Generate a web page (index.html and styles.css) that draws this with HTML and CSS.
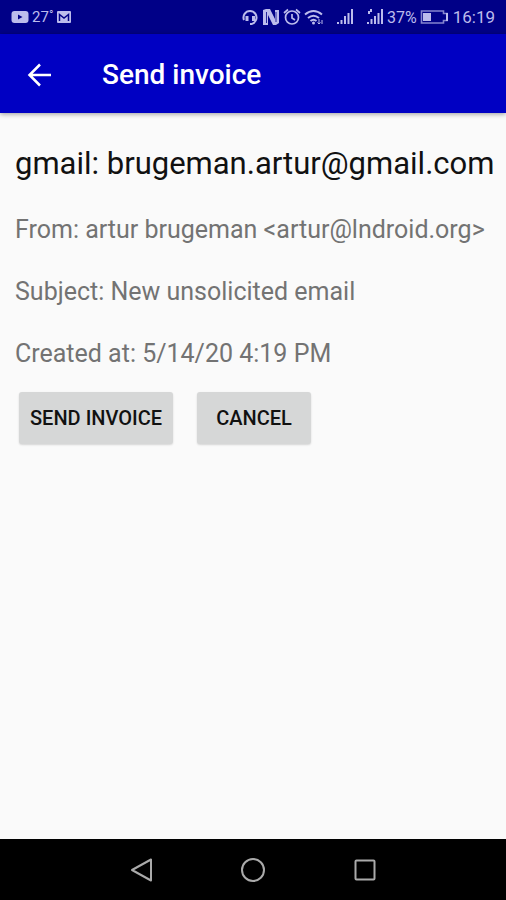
FILE: index.html
```html
<!DOCTYPE html>
<html lang="en">
<head>
<meta charset="utf-8">
<meta name="viewport" content="width=device-width, initial-scale=1">
<title>Send invoice</title>
<link rel="stylesheet" href="styles.css">
</head>
<body>
<div class="status">
  <div class="notices">
    <svg width="18" height="14" viewBox="0 0 18 14"><rect x="0.500" y="1" width="17" height="12" rx="3" fill="currentColor"/><path d="M7 4.500v5l4.500-2.500z" fill="#000087"/></svg>
    <span class="temp">27<span class="degree">°</span></span>
    <svg width="16" height="14" viewBox="0 0 16 14"><rect x="1" y="1" width="14" height="12" rx="1" fill="currentColor"/><path d="M3.500 11V4.500L8 8l4.500-3.500V11" fill="none" stroke="#000087" stroke-width="1.500"/></svg>
  </div>
  <div class="signals">
    <svg width="18" height="18" viewBox="0 0 18 18" fill="none" stroke="currentColor" stroke-width="2"><path d="M3 12a6.500 6.500 0 1 1 12 0q-1.500 4-6 4"/><path d="M6 8v5M12.500 8v5" stroke-width="3"/></svg>
    <svg width="18" height="18" viewBox="0 0 18 18"><path d="M1 2l3-1h4l5 10V2h4v13l-3 2h-3L6 7v10H1z" fill="currentColor"/><path d="M4.500 4v11M14 4v10" stroke="#000087" stroke-width="0.800"/></svg>
    <svg width="18" height="18" viewBox="0 0 18 18" fill="none" stroke="currentColor" stroke-width="1.700"><circle cx="9" cy="9.500" r="6.500"/><path d="M9 6v4l3 2M1 5l4-3.500M17 5l-4-3.500"/></svg>
    <svg width="20" height="18" viewBox="0 0 20 18" fill="none" stroke="currentColor" stroke-width="2"><path d="M1 6.500q8.500-7 17 0M4 10q5.500-4.500 11 0M6.500 13q3-2.500 6 0"/><circle cx="9.500" cy="15" r="1.500" fill="currentColor" stroke="none"/><path d="M15 11v5m-1.500-1.500L15 16l1.500-1.500M18 16v-4" stroke-width="1"/></svg>
    <svg class="bars" width="18" height="18" viewBox="0 0 18 18" fill="currentColor"><path d="M1 14h2v2H1zM4.500 12h2v4h-2zM8 8h2v8H8zM11.500 5h2v11h-2zM15 1h2v15h-2z"/></svg>
    <svg class="bars" width="18" height="18" viewBox="0 0 18 18" fill="currentColor"><path d="M1 14h2v2H1zM4.500 11h2v5h-2zM8 8h2v8H8zM11.500 5h2v11h-2zM15 1h2v15h-2zM2 3h2v3H2zM4 1h2v3H4z"/></svg>
    <span class="percent">37%</span>
    <svg class="battery" width="29" height="16" viewBox="0 0 29 16"><path d="M1.500 2h22v2.500H27v7h-3.500V14h-22z" fill="none" stroke="currentColor" stroke-opacity="0.700" stroke-width="1.600"/><path d="M3 4h8v8H3zM26 4h2v8h-2z" fill="currentColor"/></svg>
    <span class="clock">16:19</span>
  </div>
</div>
<header class="appbar">
  <button class="back" type="button" aria-label="Back"><svg width="28" height="28" viewBox="0 0 28 28" fill="none" stroke="currentColor" stroke-width="2.500"><path d="M25 14H4M14 3.500L3.500 14 14 24.500"/></svg></button>
  <h1>Send invoice</h1>
</header>
<main>
  <h2>gmail: brugeman.artur@gmail.com</h2>
  <p>From: artur brugeman &lt;artur@lndroid.org&gt;</p>
  <p>Subject: New unsolicited email</p>
  <p>Created at: 5/14/20 4:19 PM</p>
  <div class="actions">
    <button type="button">SEND INVOICE</button>
    <button type="button">CANCEL</button>
  </div>
</main>
<nav>
  <button type="button" aria-label="Back"><svg width="26" height="26" viewBox="0 0 26 26"><path d="M23 2.500v21L4 13z"/></svg></button>
  <button type="button" aria-label="Home"><svg width="26" height="26" viewBox="0 0 26 26"><circle cx="13" cy="13" r="11"/></svg></button>
  <button type="button" aria-label="Recent apps"><svg width="26" height="26" viewBox="0 0 26 26"><rect x="3.500" y="3.500" width="19" height="19" rx="1"/></svg></button>
</nav>
</body>
</html>
```
FILE: styles.css
```css
* { box-sizing: border-box; }
body {
  margin: 0;
  min-height: 100vh;
  display: flex;
  flex-direction: column;
  background: #fafafa;
  font-family: Roboto, "Liberation Sans", sans-serif;
}
svg { display: block; flex: none; }
button { border: 0; font: inherit; }
h1, h2, p { margin: 0; }
.status {
  height: 34px;
  padding: 0 11px;
  display: flex;
  align-items: center;
  justify-content: space-between;
  background: #000087;
  color: #bcbcec;
  font-size: 17px;
}
.notices, .signals { display: flex; align-items: center; gap: 3px; }
.temp { font-size: 15px; }
.degree { font-size: 12px; vertical-align: 3px; }
.bars { margin-left: 9px; }
.percent { font-size: 16px; }
.battery { margin-right: 1px; }
.appbar {
  height: 79px;
  padding: 2px 26px 0;
  display: flex;
  align-items: center;
  gap: 48px;
  background: #0000c3;
  color: #fff;
  box-shadow: 0 1px 5px rgba(0, 0, 0, 0.4);
}
.back { padding: 0; background: none; color: inherit; }
h1 { font-size: 28px; font-weight: 500; line-height: 36px; }
main { flex: 1; padding: 31px 15px; }
h2 { font-size: 31px; font-weight: 400; line-height: 40px; color: #111; white-space: nowrap; }
p { margin-top: 30px; font-size: 25px; line-height: 32px; color: #737373; white-space: nowrap; }
.actions { display: flex; gap: 24px; padding: 0 4px; margin-top: 22px; }
.actions button {
  min-width: 114px;
  height: 52px;
  padding: 0 11px;
  border-radius: 3px;
  background: #d6d7d7;
  color: #111;
  box-shadow: 0 1px 2px rgba(0, 0, 0, 0.15);
  font-size: 20px;
  font-weight: 500;
}
nav {
  height: 61px;
  padding: 0 85px;
  display: flex;
  align-items: center;
  background: #000;
}
nav button {
  flex: 1;
  height: 100%;
  padding: 0;
  display: flex;
  align-items: center;
  justify-content: center;
  background: none;
}
nav svg { fill: none; stroke: #aaa; stroke-width: 2; stroke-linejoin: round; }
```
